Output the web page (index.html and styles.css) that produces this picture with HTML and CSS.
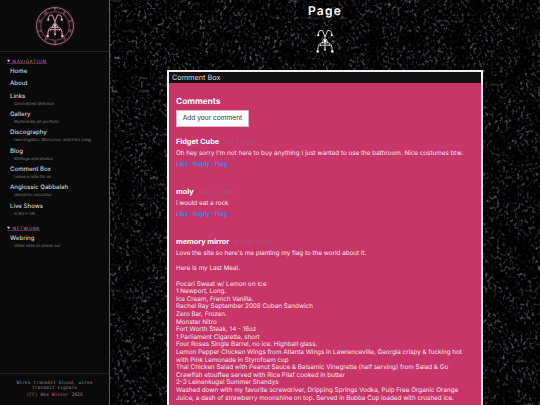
FILE: index.html
```
<!DOCTYPE html>
<html lang="en">

<head>
    <meta charset="UTF-8">
    <meta name="viewport" content="width=device-width, initial-scale=1.0">
    <title>Comment Box</title>
    <link rel="stylesheet" href="styles.css">
</head>

<body>
    <svg class="grain" width="540" height="405">
        <filter id="stone" x="0" y="0" width="100%" height="100%" color-interpolation-filters="sRGB">
            <feTurbulence type="fractalNoise" baseFrequency="0.34 0.3" numOctaves="3" seed="8" result="fine" />
            <feColorMatrix in="fine" type="matrix" values="1 .1 0 0 -.55  1 .1 0 0 -.55  .97 .1 .1 0 -.565  0 0 0 0 1" result="specks" />
            <feTurbulence type="fractalNoise" baseFrequency="0.06" numOctaves="3" seed="3" />
            <feColorMatrix type="matrix" values="3.6 0 0 0 -1.2  3.6 0 0 0 -1.2  3.6 0 0 0 -1.2  0 0 0 0 1" result="patches" />
            <feComposite in="specks" in2="patches" operator="arithmetic" k1=".85" k2=".2" />
        </filter>
        <rect width="540" height="405" filter="url(#stone)" />
    </svg>

    <svg class="defs" width="0" height="0">
        <symbol id="sigil" viewBox="0 0 34 46">
            <g fill="none" stroke="currentColor" stroke-width="1.5" stroke-linecap="round">
                <path d="M17 20 V15 L12 3 Q4 1 4 11 M17 15 L22 3 Q30 1 30 11" />
                <path d="M12 26 Q3 26 3 42 M22 26 Q31 26 31 42 M8 31 H26 M17 25 V40" />
                <path d="M12 26 L14 20 H20 L22 26 Z" />
            </g>
            <g fill="currentColor">
                <circle cx="4" cy="12" r="2" />
                <circle cx="30" cy="12" r="2" />
                <circle cx="17" cy="23" r="2.4" />
                <circle cx="3" cy="43" r="2.4" />
                <circle cx="31" cy="43" r="2.4" />
                <circle cx="17" cy="40" r="1.8" />
                <circle cx="8" cy="31" r="1.4" />
                <circle cx="26" cy="31" r="1.4" />
            </g>
        </symbol>
    </svg>

    <div class="layout">
        <div class="sidebar">
            <div class="logo">
                <svg width="42" height="42" viewBox="0 0 42 42">
                    <circle class="ring" cx="21" cy="21" r="18.5" />
                    <circle class="ring thin" cx="21" cy="21" r="14.4" />
                    <g class="rune">
                        <text x="21" y="6.4">T</text>
                        <text x="21" y="6.4" transform="rotate(36 21 21)">E</text>
                        <text x="21" y="6.4" transform="rotate(72 21 21)">Z</text>
                        <text x="21" y="6.4" transform="rotate(108 21 21)">H</text>
                        <text x="21" y="6.4" transform="rotate(144 21 21)">E</text>
                        <text x="21" y="6.4" transform="rotate(180 21 21)">X</text>
                        <text x="21" y="6.4" transform="rotate(216 21 21)">E</text>
                        <text x="21" y="6.4" transform="rotate(252 21 21)">Z</text>
                        <text x="21" y="6.4" transform="rotate(288 21 21)">H</text>
                        <text x="21" y="6.4" transform="rotate(324 21 21)">M</text>
                    </g>
                    <use href="#sigil" x="12" y="8.5" width="18" height="24" />
                </svg>
            </div>
            <div class="nav">
                <div class="nav-title"><span><i>▼</i> NAVIGATION</span></div>
                <div class="item"><b>Home</b></div>
                <div class="item"><b>About</b></div>
                <div class="item"><b>Links</b><small>Centralized direction</small></div>
                <div class="item"><b>Gallery</b><small>Multimedia art portfolio</small></div>
                <div class="item"><b>Discography</b><small>twinning00m, Murrumur, and Kata Jung</small></div>
                <div class="item"><b>Blog</b><small>Writings and photos</small></div>
                <div class="item"><b>Comment Box</b><small>Leave a note for us</small></div>
                <div class="item"><b>Anglossic Qabbalah</b><small>Gematria calculator</small></div>
                <div class="item"><b>Live Shows</b><small>In EU + UK</small></div>
                <div class="nav-title second"><span><i>▼</i> NETWORK</span></div>
                <div class="item"><b>Webring</b><small>Other sites to check out</small></div>
            </div>
            <div class="footer">
                Wires transmit blood, wires<br>transmit signals
                <div class="copy">(CC) Hex Winter 2026</div>
            </div>
        </div>

        <div class="main">
            <h1>Page</h1>
            <svg class="mark" width="18" height="24"><use href="#sigil" width="18" height="24" /></svg>
            <div class="panel">
                <div class="panel-title">Comment Box</div>
                <div class="panel-body">
                    <h2>Comments</h2>
                    <button class="add">Add your comment</button>
                    <div class="comment">
                        <div class="who">Fidget Cube <span>· Apr 7, 2026</span></div>
                        <div class="text">Oh hey sorry I'm not here to buy anything I just wanted to use the bathroom. Nice costumes btw.</div>
                        <div class="actions">Like · Reply · Flag</div>
                    </div>
                    <div class="comment">
                        <div class="who">moly <span>· Mar 31, 2026</span></div>
                        <div class="text">i would eat a rock</div>
                        <div class="actions">Like · Reply · Flag</div>
                    </div>
                    <div class="comment">
                        <div class="who">memory mirror <span>· Mar 30, 2026</span></div>
                        <div class="text">Love the site so here's me planting my flag to the world about it.<br>
                            <br>
                            Here is my Last Meal.<br>
                            <br>
                            Pocari Sweat w/ Lemon on Ice<br>
                            1 Newport, Long.<br>
                            Ice Cream, French Vanilla.<br>
                            Rachel Ray September 2008 Cuban Sandwich<br>
                            Zero Bar, Frozen.<br>
                            Monster Nitro<br>
                            Fort Worth Steak, 14 - 16oz<br>
                            1 Parliament Cigarette, short<br>
                            Four Roses Single Barrel, no ice. Highball glass.<br>
                            Lemon Pepper Chicken Wings from Atlanta Wings in Lawrenceville, Georgia crispy &amp; fucking hot<br>
                            with Pink Lemonade in Styrofoam cup<br>
                            Thai Chicken Salad with Peanut Sauce &amp; Balsamic Vinegrette (half serving) from Salad &amp; Go<br>
                            Crawfish etouffee served with Rice Pilaf cooked in butter<br>
                            2-3 Leinenkugel Summer Shandys<br>
                            Washed down with my favorite screwdriver, Dripping Springs Vodka, Pulp Free Organic Orange<br>
                            Juice, a dash of strawberry moonshine on top. Served in Bubba Cup loaded with crushed ice.</div>
                    </div>
                </div>
            </div>
        </div>
    </div>
</body>

</html>
```

FILE: styles.css
```
* {
    box-sizing: border-box;
}

body {
    margin: 0;
    height: 405px;
    overflow: hidden;
    background: #050505;
    color: white;
    font-family: Inter, "Open Sans", sans-serif;
    text-rendering: geometricPrecision;
}

.grain {
    position: absolute;
    top: 0;
    left: 0;
    z-index: -1;
}

.defs {
    position: absolute;
}

.layout {
    display: flex;
    height: 405px;
}

.sidebar {
    display: flex;
    flex-direction: column;
    width: 110px;
    flex: none;
    background: #0a0a0a;
    border-right: 1px solid #b52f60;
}

.logo {
    height: 52px;
    padding-top: 4.5px;
    text-align: center;
    color: #e8c3cc;
    border-bottom: 1px solid #222;
}

.logo svg {
    filter: drop-shadow(0 0 1px #7a2c42);
}

.ring {
    fill: none;
    stroke: #a87783;
    stroke-width: .9;
}

.thin {
    stroke-width: .5;
}

.rune {
    fill: #bd8591;
    font-size: 4px;
    text-anchor: middle;
}

.nav {
    flex: 1;
    padding: 5.5px 7px 0;
}

.nav-title {
    height: 8.6px;
    line-height: 8px;
    font-size: 4.5px;
    letter-spacing: .65px;
    color: #a3969b;
}

.nav-title span {
    display: inline-block;
    height: 6.5px;
    border-bottom: 1px solid #702040;
    line-height: 7px;
}

.nav-title i {
    font-size: 3px;
    font-style: normal;
    vertical-align: .5px;
    color: #ddd;
}

.second {
    margin-top: 5.9px;
    margin-bottom: -.4px;
}

.item {
    padding: 2.1px 3px;
    white-space: nowrap;
}

.item b {
    display: block;
    height: 8px;
    font-size: 6.1px;
    font-weight: 500;
    line-height: 8px;
    color: #d0d0d0;
}

.item small {
    display: block;
    height: 6.2px;
    padding-left: 4px;
    font-size: 4.1px;
    line-height: 6.2px;
    color: #808080;
}

.footer {
    height: 32px;
    padding-top: 7px;
    border-top: 1px solid #222;
    font-family: "DejaVu Sans Mono", monospace;
    font-size: 4.7px;
    line-height: 5px;
    text-align: center;
    color: #858585;
}

.copy {
    margin-top: 1.5px;
    color: #a86a7c;
}

.main {
    flex: 1;
    display: flex;
    flex-direction: column;
    align-items: center;
}

h1 {
    margin: 3px 0 0;
    font-size: 12px;
    line-height: 15px;
    font-weight: 600;
    letter-spacing: 1.2px;
}

.mark {
    margin-top: 11px;
    flex: none;
}

.panel {
    width: 316px;
    height: 335px;
    flex: none;
    overflow: hidden;
    margin-top: 17px;
    border: 2px solid #f4eef2;
    border-bottom: 0;
    background: #c83569;
}

.panel-title {
    height: 11px;
    padding-left: 3px;
    background: #111;
    font-size: 7.3px;
    line-height: 11px;
    color: #ddd;
}

.panel-body {
    height: 322px;
    padding: 14px 7px 0;
    overflow: hidden;
}

h2 {
    margin: 0;
    font-size: 8.4px;
    line-height: 11px;
    font-weight: 700;
}

.add {
    display: block;
    width: 73px;
    height: 17px;
    margin-top: 1.5px;
    padding: 0;
    border: 1px solid #ddb5c4;
    background: white;
    font-family: inherit;
    font-size: 6.6px;
    color: #333;
}

.comment {
    margin-top: 10px;
    height: 40.4px;
    white-space: nowrap;
}

.who {
    font-size: 7.3px;
    line-height: 10px;
    font-weight: 700;
}

.who span {
    font-size: 5.8px;
    font-weight: 400;
    color: #a4587a;
}

.text {
    margin-top: 2px;
    font-size: 6.3px;
    line-height: 7.6px;
    color: #fbe4ec;
}

.actions {
    margin-top: 2.7px;
    font-family: Roboto, sans-serif;
    font-size: 6.5px;
    font-weight: 700;
    line-height: 8px;
    color: #4580e8;
}
```
